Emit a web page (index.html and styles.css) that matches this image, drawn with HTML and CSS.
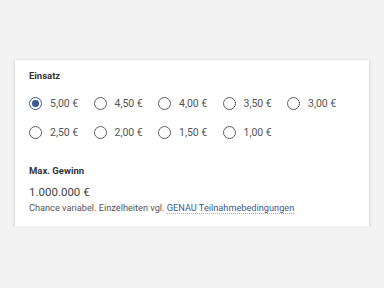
FILE: index.html
```html
<!DOCTYPE html>
<html lang="de">
<head>
    <meta charset="UTF-8">
    <title>Einsatz</title>
    <link rel="stylesheet" href="styles.css">
</head>
<body>
    <div class="card">
        <h2>Einsatz</h2>
        <div class="options">
            <label class="option"><input type="radio" name="stake" checked><span class="dot"></span>5,00 €</label>
            <label class="option"><input type="radio" name="stake"><span class="dot"></span>4,50 €</label>
            <label class="option"><input type="radio" name="stake"><span class="dot"></span>4,00 €</label>
            <label class="option"><input type="radio" name="stake"><span class="dot"></span>3,50 €</label>
            <label class="option"><input type="radio" name="stake"><span class="dot"></span>3,00 €</label>
            <label class="option"><input type="radio" name="stake"><span class="dot"></span>2,50 €</label>
            <label class="option"><input type="radio" name="stake"><span class="dot"></span>2,00 €</label>
            <label class="option"><input type="radio" name="stake"><span class="dot"></span>1,50 €</label>
            <label class="option"><input type="radio" name="stake"><span class="dot"></span>1,00 €</label>
        </div>

        <h2 class="win-title">Max. Gewinn</h2>
        <div class="win-value">1.000.000 €</div>
        <p class="note">Chance variabel. Einzelheiten vgl. <a href="#">GENAU Teilnahmebedingungen</a></p>
    </div>
</body>
</html>
```

FILE: styles.css
```css
* {
    box-sizing: border-box;
    margin: 0;
    padding: 0;
}

body {
    font-family: Roboto, "Liberation Sans", sans-serif;
    background: #f2f2f2;
    color: #555;
}

.card {
    width: 354px;
    height: 166px;
    margin: 60px 0 0 15px;
    padding: 9px 14px 0;
    background: #fff;
    box-shadow: 0 1px 3px rgba(0, 0, 0, 0.22);
}

h2 {
    font-size: 9.5px;
    font-weight: 700;
    color: #333;
    line-height: 14px;
}

.options {
    display: flex;
    flex-wrap: wrap;
    row-gap: 16px;
    margin-top: 14px;
}

.option {
    width: 64.5px;
    display: flex;
    align-items: center;
    gap: 8px;
    font-size: 10.5px;
    line-height: 13px;
    cursor: pointer;
}

.option input {
    display: none;
}

.dot {
    width: 13px;
    height: 13px;
    flex: none;
    border: 1.6px solid #5f5f5f;
    border-radius: 50%;
    display: flex;
    align-items: center;
    justify-content: center;
}

.option input:checked + .dot {
    border-color: #3d5a94;
}

.option input:checked + .dot::after {
    content: "";
    width: 6.5px;
    height: 6.5px;
    border-radius: 50%;
    background: #3d5a94;
}

.win-title {
    margin-top: 25px;
}

.win-value {
    font-size: 11.5px;
    line-height: 14px;
    margin-top: 6.5px;
    color: #444;
}

.note {
    font-size: 9.2px;
    line-height: 12px;
    margin-top: 3.5px;
}

.note a {
    color: #3d5a8a;
    text-decoration: none;
    border-bottom: 1px dotted #a3afc8;
}
```
